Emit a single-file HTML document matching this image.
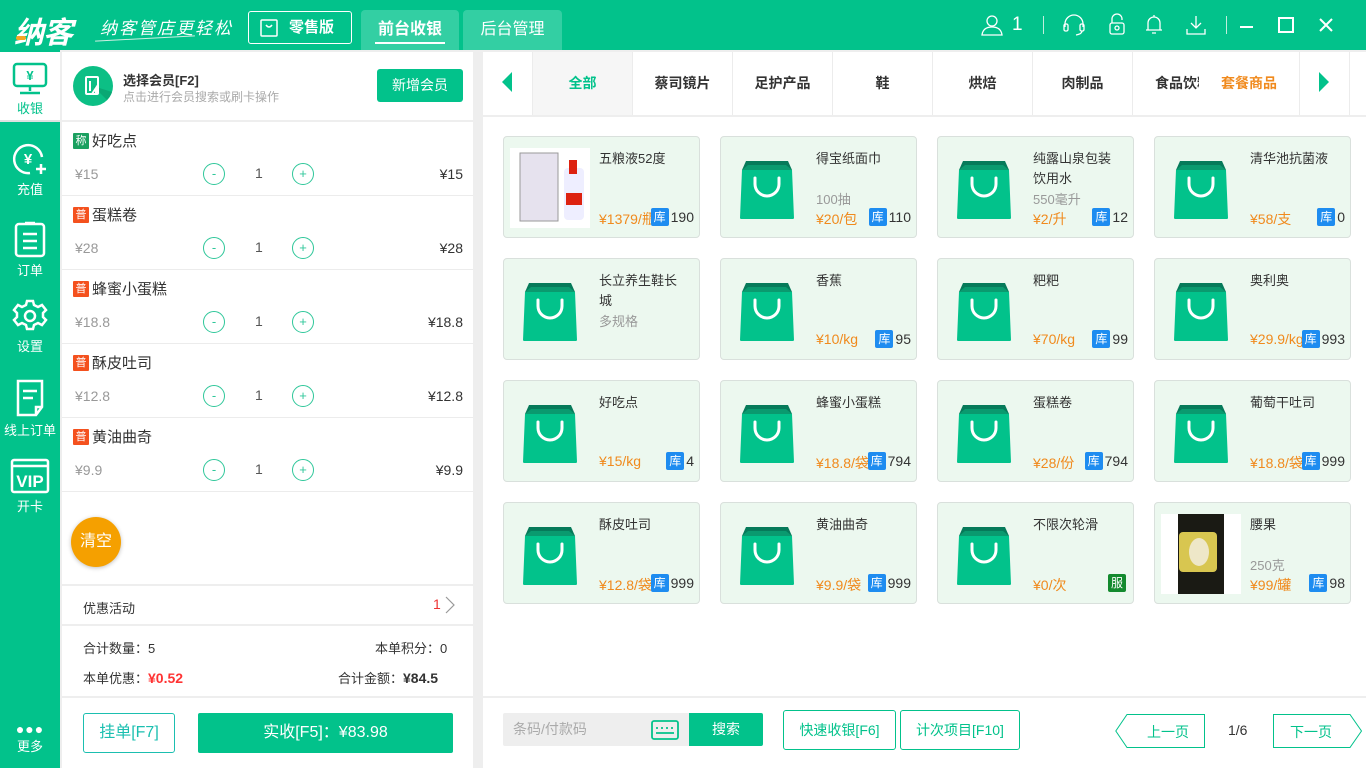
<!DOCTYPE html>
<html><head><meta charset="utf-8"><style>
*{margin:0;padding:0;box-sizing:border-box}
body{width:1366px;height:768px;position:relative;overflow:hidden;background:#eeeeee;font-family:"Liberation Sans","Noto Sans CJK SC",sans-serif;color:#333}
.a{position:absolute}
.hdr{left:0;top:0;width:1366px;height:50px;background:#02c28b}
.side{left:0;top:50px;width:60px;height:718px;background:#02c28b}
.si{position:absolute;left:0;width:60px;text-align:center;color:#fff;font-size:13px}
.si svg{display:block;margin:0 auto 2px}
.lp{left:62px;top:52px;width:411px;height:716px;background:#fff}
.row{position:absolute;left:62px;width:411px;height:74px;border-bottom:1px solid #ececec;background:#fff}
.row .t{position:absolute;left:11px;top:8px;font-size:15px;color:#333;display:flex;align-items:center}
.tag{display:inline-block;width:16px;height:16px;font-size:11px;color:#fff;text-align:center;line-height:16px;margin-right:3px;border-radius:1px}
.row .p{position:absolute;left:13px;top:44px;font-size:14px;color:#999}
.row .m,.row .pl{position:absolute;top:41px;width:22px;height:22px;border:1px solid #2fc79a;border-radius:50%;color:#2fc79a;text-align:center;line-height:19px;font-size:13px}
.row .m{left:141px}.row .pl{left:230px}
.row .q{position:absolute;left:193px;top:43px;font-size:14px;color:#555}
.row .s{position:absolute;right:10px;top:44px;font-size:14px;color:#333}
.rp{left:483px;top:52px;width:883px;height:716px;background:#fff}
.cat{position:absolute;top:52px;height:63px;border-right:1px solid #ececec;font-size:14px;font-weight:bold;color:#333;text-align:center;line-height:63px;background:#fff}
.card{position:absolute;width:197px;height:102px;background:#ecf8ef;border:1px solid #d9e0dc;border-radius:4px;overflow:hidden}
.card .im{position:absolute;left:6px;top:11px;width:80px;height:80px}
.card .n{position:absolute;left:95px;top:12px;width:86px;font-size:13px;color:#333;line-height:20px}
.card .sub{position:absolute;left:95px;top:52px;font-size:13px;color:#999}
.card .pr{position:absolute;left:95px;top:72px;font-size:14px;color:#f08a1d;white-space:nowrap}
.card .st{position:absolute;right:5px;top:71px;display:flex;align-items:center;font-size:14px;color:#333;background:#ecf8ef}
.ku{width:18px;height:18px;background:#1e8cf0;color:#fff;font-size:12px;text-align:center;line-height:18px;border-radius:2px;margin-right:2px}
.btn{position:absolute;border:1px solid #02c28b;border-radius:3px;color:#02c28b;font-size:14px;text-align:center;background:#fff}
</style></head><body>
<div class="a hdr"></div>
<div class="a" style="left:14px;top:8px;font-size:30px;font-weight:bold;color:#fff;font-style:italic;letter-spacing:-1px">纳客</div>
<div class="a" style="left:16px;top:36px;width:10px;height:4px;background:#f5a623;border-radius:2px"></div>
<div class="a" style="left:100px;top:14px;font-size:17px;color:#fff;font-style:italic;letter-spacing:2px">纳客管店更轻松</div>
<div class="a" style="left:95px;top:38px;width:100px;height:1px;background:#cfeee2;transform:rotate(-3deg)"></div>
<div class="a" style="left:248px;top:11px;width:104px;height:33px;border:1px solid #fff;border-radius:3px;color:#fff;font-size:15px;font-weight:bold;line-height:31px;padding-left:40px">零售版</div>
<svg class="a" style="left:259px;top:18px" width="20" height="20" viewBox="0 0 20 20"><rect x="2" y="2" width="16" height="16" rx="1" fill="none" stroke="#fff" stroke-width="1.5"/><path d="M7 7q3 4 6 0" fill="none" stroke="#fff" stroke-width="1.5"/></svg>
<div class="a" style="left:361px;top:10px;width:98px;height:40px;background:#33cfa3;border-radius:4px 4px 0 0;color:#fff;font-size:16px;font-weight:bold;text-align:center;line-height:40px">前台收银</div>
<div class="a" style="left:375px;top:42px;width:70px;height:2px;background:#fff"></div>
<div class="a" style="left:463px;top:10px;width:99px;height:40px;background:#33cfa3;border-radius:4px 4px 0 0;color:#fff;font-size:16px;text-align:center;line-height:40px">后台管理</div>
<svg class="a" style="left:980px;top:14px" width="24" height="22" viewBox="0 0 24 22" fill="none" stroke="#fff" stroke-width="1.3"><circle cx="12" cy="7" r="5"/><path d="M2 21q1-8 10-8t10 8z"/></svg>
<div class="a" style="left:1012px;top:14px;color:#fff;font-size:19px">1</div>
<div class="a" style="left:1043px;top:16px;width:1px;height:18px;background:#bfeedd"></div>
<svg class="a" style="left:1062px;top:14px" width="24" height="22" viewBox="0 0 24 22" fill="none" stroke="#fff" stroke-width="1.3"><path d="M3 13V10a9 9 0 0 1 18 0v3"/><rect x="2" y="10" width="4" height="7" rx="1.5"/><rect x="18" y="10" width="4" height="7" rx="1.5"/><path d="M20 17q0 3-6 4"/></svg>
<svg class="a" style="left:1108px;top:13px" width="18" height="22" viewBox="0 0 18 22" fill="none" stroke="#fff" stroke-width="1.3"><path d="M4 10V6a5 5 0 0 1 10 0v1"/><rect x="2" y="10" width="14" height="11" rx="2"/><circle cx="9" cy="15" r="2"/></svg>
<svg class="a" style="left:1145px;top:13px" width="18" height="22" viewBox="0 0 18 22" fill="none" stroke="#fff" stroke-width="1.3"><path d="M9 2v2M3 17V10a6 6 0 0 1 12 0v7zM1 17h16M7 20h4"/></svg>
<svg class="a" style="left:1185px;top:14px" width="22" height="22" viewBox="0 0 22 22" fill="none" stroke="#fff" stroke-width="1.3"><path d="M11 2v12M6 9l5 5 5-5M2 15v5h18v-5"/></svg>
<div class="a" style="left:1226px;top:16px;width:1px;height:18px;background:#bfeedd"></div>
<div class="a" style="left:1240px;top:26px;width:13px;height:2px;background:#fff"></div>
<div class="a" style="left:1278px;top:17px;width:16px;height:16px;border:2px solid #fff"></div>
<svg class="a" style="left:1319px;top:18px" width="14" height="14" viewBox="0 0 14 14" stroke="#fff" stroke-width="2"><path d="M1 1l12 12M13 1L1 13"/></svg>

<div class="a side"></div>
<div class="a" style="left:0;top:52px;width:60px;height:68px;background:#fff"></div>
<div class="a" style="left:0;top:120px;width:60px;height:2px;background:#e0e0e0"></div>
<div class="si" style="top:62px;color:#02c28b"><svg width="36" height="34" viewBox="0 0 36 34" fill="none" stroke="#02c28b" stroke-width="2.5"><rect x="2" y="2" width="32" height="22" rx="3"/><path d="M18 24v5M8 31h20"/><text x="18" y="18" font-size="13" font-weight="bold" fill="#02c28b" stroke="none" text-anchor="middle">¥</text></svg>收银</div>
<div class="si" style="top:143px"><svg width="36" height="34" viewBox="0 0 36 34" fill="none" stroke="#fff" stroke-width="2.5"><path d="M30 14A14 14 0 1 0 18 30"/><path d="M24 26h10M29 21v10"/><text x="16" y="21" font-size="15" font-weight="bold" fill="#fff" stroke="none" text-anchor="middle">¥</text></svg>充值</div>
<div class="si" style="top:220px"><svg width="36" height="38" viewBox="0 0 36 38" fill="none" stroke="#fff" stroke-width="2.5"><rect x="4" y="4" width="28" height="32" rx="3"/><path d="M13 3h10M11 14h14M11 21h14M11 28h14"/></svg>订单</div>
<div class="si" style="top:298px"><svg width="36" height="36" viewBox="0 0 36 36" fill="none" stroke="#fff" stroke-width="2.5"><path d="M15 3h6l1 4 4 2 4-2 4 5-3 3v4l3 3-4 5-4-2-4 2-1 4h-6l-1-4-4-2-4 2-4-5 3-3v-4l-3-3 4-5 4 2 4-2z"/><circle cx="18" cy="18" r="5"/></svg>设置</div>
<div class="si" style="top:378px"><svg width="36" height="40" viewBox="0 0 36 40" fill="none" stroke="#fff" stroke-width="2.5"><path d="M24 37H6V3h24v26zM24 37v-8h6M11 13h14M11 20h10"/></svg>线上订单</div>
<div class="si" style="top:458px"><svg width="40" height="36" viewBox="0 0 40 36" fill="none" stroke="#fff" stroke-width="2.5"><rect x="2" y="2" width="36" height="32" rx="2"/><path d="M2 8h36"/><text x="20" y="29" font-size="17" font-weight="bold" fill="#fff" stroke="none" text-anchor="middle">VIP</text></svg>开卡</div>
<div class="si" style="top:722px"><div style="font-size:14px;letter-spacing:1px;line-height:14px">●●●</div>更多</div>

<div class="a lp"></div>
<div class="a" style="left:62px;top:120px;width:411px;height:2px;background:#eee"></div>
<svg class="a" style="left:72px;top:65px" width="42" height="42" viewBox="0 0 42 42"><circle cx="21" cy="21" r="20" fill="#0cbf85"/><path d="M21 21l14 14a20 20 0 0 0 5-8z" fill="#0aa874"/><rect x="14" y="12" width="12" height="17" rx="1" fill="none" stroke="#fff" stroke-width="2"/><path d="M18 16v10M20 29l4-6v7" fill="none" stroke="#fff" stroke-width="2"/></svg>
<div class="a" style="left:123px;top:70px;font-size:13px;font-weight:bold;color:#333">选择会员[F2]</div>
<div class="a" style="left:123px;top:88px;font-size:12px;color:#aaa">点击进行会员搜索或刷卡操作</div>
<div class="a" style="left:377px;top:69px;width:86px;height:33px;background:#02c28b;border-radius:3px;color:#fff;font-size:14px;text-align:center;line-height:33px">新增会员</div>

<div class="row" style="top:122px"><div class="t"><span class="tag" style="background:#1ba060">称</span>好吃点</div><div class="p">¥15</div><div class="m">-</div><div class="q">1</div><div class="pl">+</div><div class="s">¥15</div></div>
<div class="row" style="top:196px"><div class="t"><span class="tag" style="background:#f4511e">普</span>蛋糕卷</div><div class="p">¥28</div><div class="m">-</div><div class="q">1</div><div class="pl">+</div><div class="s">¥28</div></div>
<div class="row" style="top:270px"><div class="t"><span class="tag" style="background:#f4511e">普</span>蜂蜜小蛋糕</div><div class="p">¥18.8</div><div class="m">-</div><div class="q">1</div><div class="pl">+</div><div class="s">¥18.8</div></div>
<div class="row" style="top:344px"><div class="t"><span class="tag" style="background:#f4511e">普</span>酥皮吐司</div><div class="p">¥12.8</div><div class="m">-</div><div class="q">1</div><div class="pl">+</div><div class="s">¥12.8</div></div>
<div class="row" style="top:418px"><div class="t"><span class="tag" style="background:#f4511e">普</span>黄油曲奇</div><div class="p">¥9.9</div><div class="m">-</div><div class="q">1</div><div class="pl">+</div><div class="s">¥9.9</div></div>

<div class="a" style="left:71px;top:517px;width:50px;height:50px;border-radius:50%;background:#f5a000;color:#fff;font-size:16px;text-align:center;line-height:50px;box-shadow:0 1px 4px rgba(0,0,0,.25)">清空</div>
<div class="a" style="left:62px;top:584px;width:411px;height:2px;background:#eee"></div>
<div class="a" style="left:83px;top:598px;font-size:13px;color:#333">优惠活动</div>
<div class="a" style="left:433px;top:596px;font-size:14px;color:#e33">1</div>
<svg class="a" style="left:445px;top:596px" width="10" height="18" viewBox="0 0 10 18"><path d="M1 1l8 8-8 8" fill="none" stroke="#999" stroke-width="1.2"/></svg>
<div class="a" style="left:62px;top:624px;width:411px;height:2px;background:#eee"></div>
<div class="a" style="left:83px;top:638px;font-size:13px;color:#333">合计数量：5</div>
<div class="a" style="left:375px;top:638px;font-size:13px;color:#333">本单积分：0</div>
<div class="a" style="left:83px;top:668px;font-size:13px;color:#333">本单优惠：<b style="color:#f33;font-size:14px">¥0.52</b></div>
<div class="a" style="left:338px;top:668px;font-size:13px;color:#333">合计金额：<b style="font-size:14px">¥84.5</b></div>
<div class="a" style="left:62px;top:696px;width:411px;height:2px;background:#eee"></div>
<div class="btn" style="left:83px;top:713px;width:92px;height:40px;line-height:38px;font-size:16px;border-color:#1bbfb0;color:#1bbfb0">挂单[F7]</div>
<div class="a" style="left:198px;top:713px;width:255px;height:40px;background:#02c28b;border-radius:2px;color:#fff;font-size:16px;text-align:center;line-height:40px">实收[F5]：¥83.98</div>

<div class="a rp"></div>
<div class="a" style="left:483px;top:115px;width:883px;height:2px;background:#eee"></div>
<div class="cat" style="left:483px;width:50px"></div>
<svg class="a" style="left:502px;top:72px" width="12" height="20"><path d="M10 0v20L0 10z" fill="#02c28b"/></svg>
<div class="cat" style="left:533px;width:100px;background:#f6f6f6;color:#02c28b">全部</div>
<div class="cat" style="left:633px;width:100px">蔡司镜片</div>
<div class="cat" style="left:733px;width:100px">足护产品</div>
<div class="cat" style="left:833px;width:100px">鞋</div>
<div class="cat" style="left:933px;width:100px">烘焙</div>
<div class="cat" style="left:1033px;width:100px">肉制品</div>
<div class="cat" style="left:1133px;width:167px;text-align:left;padding-left:22px;overflow:hidden"><span style="display:inline-block;width:44px;overflow:hidden;vertical-align:top;white-space:nowrap">食品饮料</span><span style="color:#f08a1d;margin-left:22px">套餐商品</span></div>
<div class="cat" style="left:1300px;width:50px"></div>
<svg class="a" style="left:1319px;top:72px" width="12" height="20"><path d="M0 0v20L10 10z" fill="#02c28b"/></svg>

<svg width="0" height="0" style="position:absolute"><defs><symbol id="bag" viewBox="0 0 80 80"><path d="M15 22L13 70q0 1 2 1h50q2 0 2-1L65 22z" fill="#02c28b"/><path d="M19 13h42l4 9H15z" fill="#067a5a"/><path d="M15 22l6-5h38l6 5z" fill="#0a9a6f"/><path d="M28 30v6a12 12 0 0 0 24 0v-6" fill="none" stroke="#fff" stroke-width="3" stroke-linecap="round"/></symbol></defs></svg>

<!-- row 1 -->
<div class="card" style="left:503px;top:136px"><svg class="im" viewBox="0 0 80 80"><rect width="80" height="80" fill="#fff"/><rect x="10" y="5" width="38" height="68" fill="#e6e2ee" stroke="#999"/><rect x="54" y="20" width="20" height="52" rx="4" fill="#eef"/><rect x="59" y="12" width="8" height="14" fill="#d21"/><rect x="56" y="45" width="16" height="12" fill="#d21"/></svg><div class="n">五粮液52度</div><div class="pr">¥1379/瓶</div><div class="st"><span class="ku">库</span>190</div></div>
<div class="card" style="left:720px;top:136px"><svg class="im"><use href="#bag"/></svg><div class="n">得宝纸面巾</div><div class="sub">100抽</div><div class="pr">¥20/包</div><div class="st"><span class="ku">库</span>110</div></div>
<div class="card" style="left:937px;top:136px"><svg class="im"><use href="#bag"/></svg><div class="n">纯露山泉包装饮用水</div><div class="sub">550毫升</div><div class="pr">¥2/升</div><div class="st"><span class="ku">库</span>12</div></div>
<div class="card" style="left:1154px;top:136px"><svg class="im"><use href="#bag"/></svg><div class="n">清华池抗菌液</div><div class="pr">¥58/支</div><div class="st"><span class="ku">库</span>0</div></div>
<!-- row 2 -->
<div class="card" style="left:503px;top:258px"><svg class="im"><use href="#bag"/></svg><div class="n">长立养生鞋长城</div><div class="sub" style="top:52px">多规格</div></div>
<div class="card" style="left:720px;top:258px"><svg class="im"><use href="#bag"/></svg><div class="n">香蕉</div><div class="pr">¥10/kg</div><div class="st"><span class="ku">库</span>95</div></div>
<div class="card" style="left:937px;top:258px"><svg class="im"><use href="#bag"/></svg><div class="n">粑粑</div><div class="pr">¥70/kg</div><div class="st"><span class="ku">库</span>99</div></div>
<div class="card" style="left:1154px;top:258px"><svg class="im"><use href="#bag"/></svg><div class="n">奥利奥</div><div class="pr">¥29.9/kg</div><div class="st"><span class="ku">库</span>993</div></div>
<!-- row 3 -->
<div class="card" style="left:503px;top:380px"><svg class="im"><use href="#bag"/></svg><div class="n">好吃点</div><div class="pr">¥15/kg</div><div class="st"><span class="ku">库</span>4</div></div>
<div class="card" style="left:720px;top:380px"><svg class="im"><use href="#bag"/></svg><div class="n">蜂蜜小蛋糕</div><div class="pr">¥18.8/袋</div><div class="st"><span class="ku">库</span>794</div></div>
<div class="card" style="left:937px;top:380px"><svg class="im"><use href="#bag"/></svg><div class="n">蛋糕卷</div><div class="pr">¥28/份</div><div class="st"><span class="ku">库</span>794</div></div>
<div class="card" style="left:1154px;top:380px"><svg class="im"><use href="#bag"/></svg><div class="n">葡萄干吐司</div><div class="pr">¥18.8/袋</div><div class="st"><span class="ku">库</span>999</div></div>
<!-- row 4 -->
<div class="card" style="left:503px;top:502px"><svg class="im"><use href="#bag"/></svg><div class="n">酥皮吐司</div><div class="pr">¥12.8/袋</div><div class="st"><span class="ku">库</span>999</div></div>
<div class="card" style="left:720px;top:502px"><svg class="im"><use href="#bag"/></svg><div class="n">黄油曲奇</div><div class="pr">¥9.9/袋</div><div class="st"><span class="ku">库</span>999</div></div>
<div class="card" style="left:937px;top:502px"><svg class="im"><use href="#bag"/></svg><div class="n">不限次轮滑</div><div class="pr">¥0/次</div><div class="st"><span class="ku" style="background:#138a2e">服</span></div></div>
<div class="card" style="left:1154px;top:502px"><svg class="im" viewBox="0 0 80 80"><rect width="80" height="80" fill="#fff"/><rect x="17" y="0" width="46" height="80" fill="#1a1a14"/><rect x="18" y="18" width="38" height="40" rx="4" fill="#d8c650"/><ellipse cx="38" cy="38" rx="10" ry="14" fill="#eee7c8"/></svg><div class="n">腰果</div><div class="sub">250克</div><div class="pr">¥99/罐</div><div class="st"><span class="ku">库</span>98</div></div>

<div class="a" style="left:483px;top:696px;width:883px;height:2px;background:#eee"></div>
<div class="a" style="left:503px;top:713px;width:186px;height:33px;background:#eee;border-radius:2px 0 0 2px;color:#aaa;font-size:14px;line-height:33px;padding-left:10px">条码/付款码</div>
<svg class="a" style="left:651px;top:720px" width="28" height="20" viewBox="0 0 28 20" fill="none" stroke="#02c28b" stroke-width="1.8"><rect x="1" y="1" width="26" height="18" rx="2"/><path d="M5 8h2M10 8h2M15 8h2M20 8h2M5 13h18"/></svg>
<div class="a" style="left:689px;top:713px;width:74px;height:33px;background:#02c28b;border-radius:0 2px 2px 0;color:#fff;font-size:14px;text-align:center;line-height:33px">搜索</div>
<div class="btn" style="left:783px;top:710px;width:113px;height:40px;line-height:38px">快速收银[F6]</div>
<div class="btn" style="left:900px;top:710px;width:120px;height:40px;line-height:38px">计次项目[F10]</div>
<svg class="a" style="left:1115px;top:714px" width="90" height="34" viewBox="0 0 90 34"><path d="M12 .5H89.5v33H12L.8 17z" fill="#fff" stroke="#02c28b"/><text x="53" y="23" font-size="14" fill="#02c28b" text-anchor="middle" font-family="Noto Sans CJK SC">上一页</text></svg>
<div class="a" style="left:1228px;top:722px;font-size:14px;color:#333">1/6</div>
<svg class="a" style="left:1273px;top:714px" width="90" height="34" viewBox="0 0 90 34"><path d="M.5 .5H77L88.5 17 77 33.5H.5z" fill="#fff" stroke="#02c28b"/><text x="38" y="23" font-size="14" fill="#02c28b" text-anchor="middle" font-family="Noto Sans CJK SC">下一页</text></svg>
</body></html>
